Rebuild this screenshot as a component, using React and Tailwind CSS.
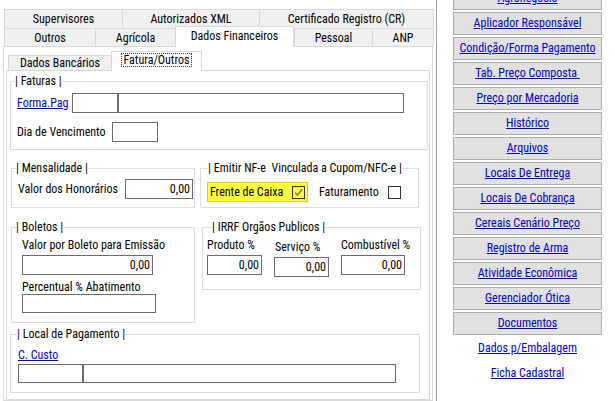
import React from "react";

const FONT = "font-['Roboto','Liberation_Sans',sans-serif] [font-stretch:condensed]";

function Group({ title, legendLeft = 4, className = "", children }) {
  return (
    <div className={"relative border border-[#dcdcdc] " + className}>
      <span
        className="absolute top-[-7px] bg-white leading-[13px] whitespace-pre"
        style={{ left: legendLeft }}
      >
        {title}
      </span>
      {children}
    </div>
  );
}

function Box({ className = "", value }) {
  return (
    <div
      className={
        "border border-[#6a6a6a] bg-white flex items-center justify-end pr-[2px] leading-[13px] " +
        className
      }
    >
      {value}
    </div>
  );
}

function Check({ checked, className = "" }) {
  return (
    <div
      className={
        "w-[13px] h-[13px] shrink-0 border border-[#333] flex items-center justify-center " +
        className
      }
    >
      {checked && (
        <svg width="11" height="11" viewBox="0 0 11 11">
          <path d="M2 5.5 L4.5 8 L9 2.5" fill="none" stroke="#5f7d3c" strokeWidth="1.3" />
        </svg>
      )}
    </div>
  );
}

const topTabs = [
  { label: "Supervisores", w: "w-[118px]" },
  { label: "Autorizados XML", w: "w-[137px]" },
  { label: "Certificado Registro (CR)", w: "w-[175px]" },
];

const lowTabs = [
  { label: "Outros", w: "w-[91px]" },
  { label: "Agrícola", w: "w-[80px]" },
  { label: "Dados Financeiros", w: "w-[119px]", active: true },
  { label: "Pessoal", w: "w-[78px]" },
  { label: "ANP", w: "w-[62px]" },
];

const buttons = [
  "Agronegócio",
  "Aplicador Responsável",
  "Condição/Forma Pagamento",
  "Tab. Preço Composta ",
  "Preço por Mercadoria",
  "Histórico",
  "Arquivos",
  "Locais De Entrega",
  "Locais De Cobrança",
  "Cereais Cenário Preço",
  "Registro de Arma",
  "Atividade Econômica",
  "Gerenciador Ótica",
  "Documentos",
];

export default function App() {
  return (
    <div className={"w-[615px] h-[401px] bg-white overflow-hidden flex text-[12px] leading-[13px] text-black " + FONT}>
      {/* left: tabbed form */}
      <div className="w-[434px] h-full flex flex-col pl-[3px] pt-[9px]">
        <div className="ml-[1px] flex h-[19px]">
          {topTabs.map((t, i) => (
            <div
              key={t.label}
              className={
                t.w +
                " h-full bg-[#f0f0f0] border-t border-l border-[#d9d9d9] flex items-center justify-center " +
                (i === topTabs.length - 1 ? "border-r" : "")
              }
            >
              {t.label}
            </div>
          ))}
        </div>
        <div className="ml-[1px] flex h-[18px] items-start">
          {lowTabs.map((t, i) =>
            t.active ? (
              <div
                key={t.label}
                className={
                  t.w +
                  " relative z-10 mt-[-2px] h-[21px] bg-white border-t border-l border-r border-[#d9d9d9] flex items-start justify-center pt-[3px]"
                }
              >
                {t.label}
              </div>
            ) : (
              <div
                key={t.label}
                className={
                  t.w +
                  " h-full bg-[#f0f0f0] border-t border-l border-[#d9d9d9] flex items-center justify-center pt-[2px] " +
                  (i === lowTabs.length - 1 ? "border-r" : "")
                }
              >
                {t.label}
              </div>
            )
          )}
        </div>

        {/* outer sheet */}
        <div className="w-[430px] flex-1 border border-[#d9d9d9] bg-white flex flex-col pt-[4px]">
          <div className="flex items-end h-[19px] ml-[4px]">
            <div className="w-[103px] h-[15px] bg-[#f0f0f0] border-t border-l border-[#d9d9d9] flex items-center justify-center pt-[1px]">
              Dados Bancários
            </div>
            <div className="relative z-10 mb-[-1px] w-[91px] h-[20px] bg-white border-t border-l border-r border-[#d9d9d9] flex items-start justify-center pt-[1px]">
              <span className="border border-dotted border-[#333] px-[2px] h-[14px] leading-[12px]">
                Fatura/Outros
              </span>
            </div>
          </div>

          {/* inner sheet */}
          <div className="ml-[2px] w-[424px] flex-1 border border-[#d9d9d9] flex flex-col">
            <Group title="| Faturas |" legendLeft={4} className="ml-[3px] mt-[10px] w-[418px] h-[69px] shrink-0">
              <div className="pt-[11px] pl-[6px] flex items-center">
                <span className="w-[55px] text-[#0000cc] underline">Forma.Pag</span>
                <Box className="w-[46px] h-[20px]" />
                <Box className="w-[286px] h-[20px]" />
              </div>
              <div className="mt-[9px] pl-[6px] flex items-center">
                <span className="w-[95px]">Dia de Vencimento</span>
                <Box className="w-[46px] h-[20px]" />
              </div>
            </Group>

            <div className="flex items-start mt-[18px] shrink-0">
              <Group title="| Mensalidade |" legendLeft={4} className="ml-[4px] w-[184px] h-[40px]">
                <div className="pt-[10px] pl-[6px] flex items-center">
                  <span className="w-[107px]">Valor dos Honorários</span>
                  <Box className="w-[68px] h-[20px]" value="0,00" />
                </div>
              </Group>
              <Group
                title="| Emitir NF-e  Vinculada a Cupom/NFC-e |"
                legendLeft={7}
                className="ml-[5px] w-[219px] h-[40px]"
              >
                <div className="pt-[13px] pl-[6px] flex items-center">
                  <div className="w-[101px] h-[20px] bg-[#ffff3c] border border-[#e3d000] flex items-center pl-[2px]">
                    <span className="w-[82px]">Frente de Caixa</span>
                    <Check checked />
                  </div>
                  <span className="ml-[11px] w-[69px]">Faturamento</span>
                  <Check className="bg-white" />
                </div>
              </Group>
            </div>

            <div className="flex items-start mt-[19px] shrink-0">
              <Group title="| Boletos |" legendLeft={4} className="ml-[4px] w-[184px] h-[96px]">
                <div className="pl-[10px] flex flex-col">
                  <span className="mt-[11px]">Valor por Boleto para Emissão</span>
                  <Box className="mt-[3px] w-[131px] h-[20px]" value="0,00" />
                  <span className="mt-[6px]">Percentual % Abatimento</span>
                  <Box className="w-[134px] h-[19px]" />
                </div>
              </Group>
              <Group title="| IRRF Orgãos Publicos |" legendLeft={9} className="ml-[7px] w-[219px] h-[63px]">
                <div className="pl-[4px] flex items-start">
                  <div className="w-[55px] flex flex-col">
                    <span className="mt-[11px]">Produto %</span>
                    <Box className="mt-[3px] w-[55px] h-[20px]" value="0,00" />
                  </div>
                  <div className="ml-[12px] w-[55px] flex flex-col">
                    <span className="mt-[13px] pl-[1px]">Serviço %</span>
                    <Box className="mt-[3px] w-[55px] h-[20px]" value="0,00" />
                  </div>
                  <div className="ml-[12px] w-[64px] flex flex-col">
                    <span className="mt-[11px] whitespace-nowrap">Combustível %</span>
                    <Box className="mt-[3px] w-[64px] h-[20px]" value="0,00" />
                  </div>
                </div>
              </Group>
            </div>

            <Group title="| Local de Pagamento |" legendLeft={6} className="ml-[3px] mt-[11px] w-[410px] h-[59px] shrink-0">
              <div className="pl-[7px] flex flex-col">
                <span className="mt-[14px] text-[#0000cc] underline self-start">C. Custo</span>
                <div className="mt-[2px] flex">
                  <Box className="w-[65px] h-[19px]" />
                  <Box className="w-[313px] h-[19px]" />
                </div>
              </div>
            </Group>
          </div>
        </div>
      </div>

      {/* splitter */}
      <div className="ml-[2px] w-px h-full bg-[#a0a0a0]" />

      {/* right: button list */}
      <div className="ml-[16px] w-[149px] flex flex-col gap-[2px] mt-[-13px]">
        {buttons.map((b) => (
          <div
            key={b}
            className="h-[23px] shrink-0 bg-[#e1e1e1] border border-[#adadad] flex items-center justify-center"
          >
            <span className="text-[#0000cc] underline whitespace-pre">{b}</span>
          </div>
        ))}
        {["Dados p/Embalagem", "Ficha Cadastral"].map((b) => (
          <div key={b} className="h-[23px] shrink-0 flex items-center justify-center">
            <span className="text-[#0000cc] underline">{b}</span>
          </div>
        ))}
      </div>
    </div>
  );
}
